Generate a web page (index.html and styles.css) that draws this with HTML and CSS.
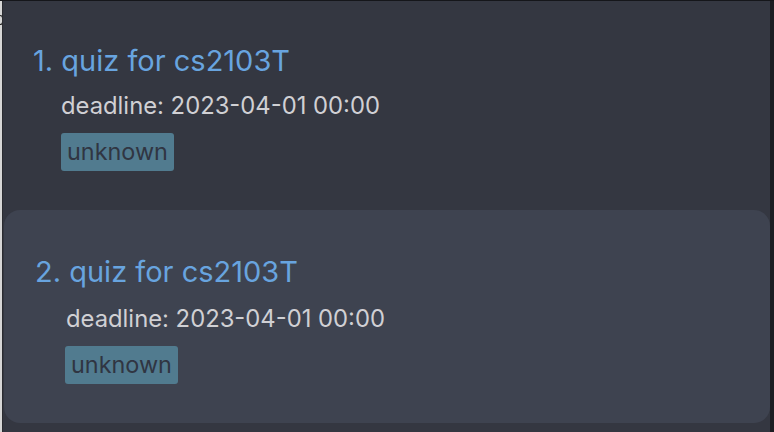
FILE: index.html
```html
<!DOCTYPE html>
<html>
<head>
<meta charset="utf-8">
<link rel="stylesheet" href="styles.css">
</head>
<body>
<div class="window">
  <div class="left-edge"><span class="clip"></span></div>
  <div class="list">
    <div class="cell">
      <div class="title">1. quiz for cs2103T</div>
      <div class="deadline">deadline: 2023-04-01 00:00</div>
      <div class="tags"><span class="tag">unknown</span></div>
    </div>
    <div class="cell selected">
      <div class="title">2. quiz for cs2103T</div>
      <div class="deadline">deadline: 2023-04-01 00:00</div>
      <div class="tags"><span class="tag">unknown</span></div>
    </div>
  </div>
  <div class="right-edge"></div>
</div>
</body>
</html>
```
FILE: styles.css
```css
html, body {
  margin: 0;
  padding: 0;
  width: 774px;
  height: 432px;
  overflow: hidden;
  background: #343741;
  font-family: "Inter", "Noto Sans", sans-serif;
}
.window {
  display: flex;
  height: 432px;
  box-sizing: border-box;
  border-top: 1px solid #15161a;
}
.left-edge {
  width: 2px;
  background: #d6d6d6;
  border-right: 1px solid #2a2b30;
  position: relative;
  overflow: hidden;
}
.clip {
  position: absolute;
  left: 0;
  top: 14px;
  width: 2px;
  height: 8px;
  border: 1px solid #222;
  border-left: none;
  border-radius: 0 4px 4px 0;
}
.list {
  flex: 1;
  display: flex;
  flex-direction: column;
}
.cell {
  height: 209px;
  box-sizing: border-box;
  padding: 38px 0 0 30px;
}
.cell.selected {
  height: 213px;
  margin-left: 1px;
  background: #3e4350;
  border-radius: 16px;
  padding-top: 40px;
  padding-left: 31px;
}
.title {
  color: #68a4df;
  font-size: 29px;
  line-height: 44px;
}
.deadline {
  color: #d0d0d4;
  font-size: 23.8px;
  line-height: 34px;
  margin-top: 6px;
  padding-left: 28px;
}
.tags {
  padding-left: 28px;
  margin-top: 10px;
  display: flex;
}
.selected .deadline {
  margin-top: 8px;
  padding-left: 31px;
}
.selected .tags {
  margin-top: 10px;
  padding-left: 30px;
}
.tag {
  background: #517b8f;
  color: #303542;
  font-size: 23.4px;
  line-height: 38px;
  padding: 0 6px;
  border-radius: 3px;
}
.right-edge {
  width: 4px;
  background: #1c1d22;
}
```
